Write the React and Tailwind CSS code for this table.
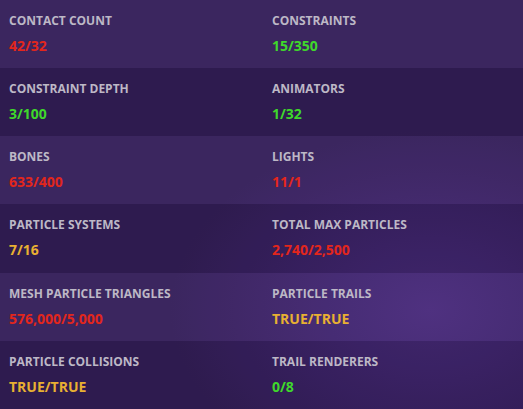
const STATS = [
  ['CONTACT COUNT', '42/32', 'red'],
  ['CONSTRAINTS', '15/350', 'green'],
  ['CONSTRAINT DEPTH', '3/100', 'green'],
  ['ANIMATORS', '1/32', 'green'],
  ['BONES', '633/400', 'red'],
  ['LIGHTS', '11/1', 'red'],
  ['PARTICLE SYSTEMS', '7/16', 'yellow'],
  ['TOTAL MAX PARTICLES', '2,740/2,500', 'red'],
  ['MESH PARTICLE TRIANGLES', '576,000/5,000', 'red'],
  ['PARTICLE TRAILS', 'TRUE/TRUE', 'yellow'],
  ['PARTICLE COLLISIONS', 'TRUE/TRUE', 'yellow'],
  ['TRAIL RENDERERS', '0/8', 'green'],
];

const VALUE_COLOR = {
  red: 'text-[#e2261c]',
  green: 'text-[#3fd82b]',
  yellow: 'text-[#e8b032]',
};

function Stat({ label, value, color }) {
  return (
    <div className="pt-[13px] pl-[9px]">
      <div className="text-[12px] leading-4 font-bold text-[#bdb8c6]">{label}</div>
      <div className={`mt-[9px] text-[14px] leading-4 font-bold ${VALUE_COLOR[color]}`}>{value}</div>
    </div>
  );
}

export default function App() {
  const rows = [];
  for (let i = 0; i < STATS.length; i += 2) rows.push([STATS[i], STATS[i + 1]]);

  return (
    <div
      className="w-[523px] h-[409px] overflow-hidden bg-[#351f5a] bg-[radial-gradient(ellipse_260px_180px_at_430px_310px,#4a2b7c_0%,#412670_40%,transparent_100%)] grid grid-rows-6"
      style={{ fontFamily: '"Open Sans", "DejaVu Sans", sans-serif' }}
    >
      {rows.map((pair, i) => (
        <div
          key={i}
          className={`grid grid-cols-[263px_1fr] ${i % 2 === 0 ? 'bg-white/[0.03]' : 'bg-black/[0.12]'}`}
        >
          {pair.map(([label, value, color]) => (
            <Stat key={label} label={label} value={value} color={color} />
          ))}
        </div>
      ))}
    </div>
  );
}
